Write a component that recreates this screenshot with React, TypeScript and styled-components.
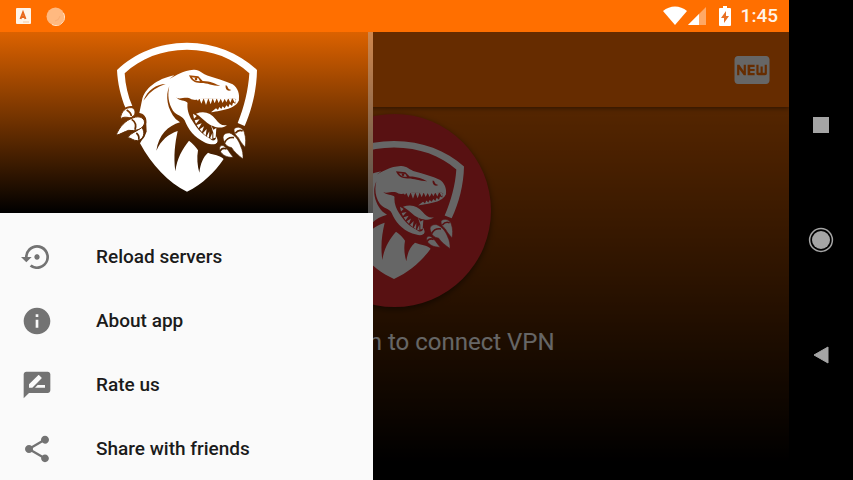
import React, { useId } from "react";
import styled, { createGlobalStyle } from "styled-components";
import {
  MdFiberNew,
  MdInfo,
  MdRateReview,
  MdSettingsBackupRestore,
  MdShare,
} from "react-icons/md";

const GlobalStyle = createGlobalStyle`
  *, *::before, *::after { box-sizing: border-box; }
  body { margin: 0; background: #000; font-family: Roboto, "Liberation Sans", sans-serif; }
  button { font: inherit; border: 0; padding: 0; background: none; color: inherit; cursor: pointer; }
`;

const Device = styled.div`
  display: grid;
  grid-template-columns: minmax(0, 1fr) 64px;
  min-height: 100vh;
  background: #000;
`;

const Screen = styled.div`
  display: flex;
  flex-direction: column;
  min-width: 0;
`;

const StatusBar = styled.header`
  display: flex;
  align-items: center;
  justify-content: space-between;
  height: 32px;
  padding: 0 11px 0 16px;
  background: #ff6f00;
  color: #fff4e8;
`;

const StatusGroup = styled.div<{ $gap: number }>`
  display: flex;
  align-items: center;
  gap: ${(p) => p.$gap}px;
`;

const Clock = styled.time`
  margin-left: 4px;
  font-size: 19px;
  font-weight: 500;
  line-height: 24px;
`;

const Stage = styled.div`
  position: relative;
  display: flex;
  flex: 1;
  flex-direction: column;
  overflow: hidden;
`;

const AppBar = styled.div`
  display: flex;
  align-items: center;
  justify-content: flex-end;
  height: 75px;
  padding: 0 16px;
  background: #ff6f00;
  box-shadow: 0 1px 5px rgba(0, 0, 0, 0.5);
  z-index: 0;
`;

const NewButton = styled.button`
  display: flex;
  color: #fff;
  font-size: 42px;
`;

const Home = styled.main`
  display: flex;
  flex: 1;
  flex-direction: column;
  align-items: center;
  gap: 20px;
  padding-top: 7px;
  background: linear-gradient(#d45e00, #000 96%);
`;

const ConnectButton = styled.button`
  display: flex;
  align-items: center;
  justify-content: center;
  width: 193px;
  height: 193px;
  padding: 0 4px 6px 0;
  border-radius: 50%;
  background: #dc2c2e;
  color: #fff;
  box-shadow: 0 2px 6px rgba(0, 0, 0, 0.5);
`;

const Hint = styled.p`
  margin: 0;
  color: #fff;
  font-size: 24px;
  line-height: 30px;
  white-space: nowrap;
`;

const Scrim = styled.div`
  position: absolute;
  inset: 0;
  background: rgba(0, 0, 0, 0.6);
`;

const Drawer = styled.aside`
  position: absolute;
  top: 0;
  bottom: 0;
  left: 0;
  width: 373px;
  background: #fafafa;
`;

const DrawerHeader = styled.div`
  display: flex;
  justify-content: center;
  height: 181px;
  padding: 3px 0 0 3px;
  border-right: 5px solid rgba(190, 190, 190, 0.4);
  background: linear-gradient(#dc6200, #000) border-box;
  color: #fff;
`;

const Menu = styled.ul`
  margin: 0;
  padding: 12px 0 0;
  list-style: none;
`;

const MenuButton = styled.button`
  display: flex;
  align-items: center;
  gap: 43px;
  width: 100%;
  height: 64px;
  padding-left: 21px;
  color: #1b1b1b;
  font-size: 19px;
  font-weight: 500;
  line-height: 24px;
  text-align: left;

  svg {
    flex: none;
    color: #737373;
    font-size: 32px;
  }
`;

const NavBar = styled.nav`
  display: flex;
  flex-direction: column;
  align-items: center;
  justify-content: center;
  gap: 83px;
  background: #000;
`;

const NavButton = styled.button`
  display: flex;
  width: 32px;
  height: 32px;
`;

function RaptorLogo({ width, height }: { width: number; height: number }) {
  const id = useId().replace(/[^a-zA-Z0-9]/g, "");
  return (
    <svg width={width} height={height} viewBox="0 0 480 480" preserveAspectRatio="none" aria-hidden="true">
      <mask id={id} maskUnits="userSpaceOnUse" x="0" y="0" width="480" height="480">
        {/* shield rim */}
        <path fill="#fff" d="M59 220C44 185 35 145 33 105C87 54 157 24 243 23C329 24 399 54 453 105C452 164 438 223 416 273L395 264C414 217 427 165 430 115C382 70 320 45 243 44C166 45 104 70 56 115C58 150 66 184 79 213Z" />
        {/* body and head */}
        <path fill="#fff" d="M108 196C115 162 151 132 205 121L190 132C213 120 230 106 263 104C281 103 290 117 306 122C331 130 358 137 380 148C396 158 402 180 398 197L385 190C345 196 310 186 270 194L245 200C242 222 248 240 258 256C275 285 295 307 320 312L330 304C338 316 336 327 324 329L352 350L353 372C327 410 290 448 243 470C188 444 137 390 102 325L122 290L120 250L100 234Z" />
        {/* neck shadow and chest stripes */}
        <path fill="#000" d="M190 153C177 184 184 222 209 252L222 262C186 272 158 300 151 347C165 315 187 298 215 288C207 325 202 363 208 409C213 370 229 342 249 317C260 325 271 337 276 346C272 368 274 392 280 413C283 386 292 365 306 353C325 362 340 358 354 373L372 350L337 306L337 318C333 332 314 329 298 323C265 308 246 283 236 256C228 240 213 243 201 227C187 205 184 180 190 153Z" />
        {/* cheek */}
        <path fill="#000" d="M210 187C222 197 240 181 256 193L272 196L262 210L246 204C236 194 221 200 210 187Z" />
        <path fill="#000" d="M112 197C125 165 151 148 179 147C151 157 136 169 126 180Z" />
        {/* eye, brow and nostril */}
        <path fill="#000" d="M249 121L277 124L290 138C314 138 329 147 343 153C317 152 302 143 283 144C266 144 255 137 249 121Z" />
        <path fill="#fff" d="M258 127L277 130L282 139C269 139 262 135 258 127Z" />
        <circle cx="270" cy="132" r="4" fill="#000" />
        <path fill="#000" d="M359 151C367 151 362 163 376 165C366 172 357 163 359 151Z" />
        {/* upper teeth */}
        <path fill="#fff" d="M270 190L276 198L280 190L286 206L293 190L300 210L307 190L314 208L320 190L326 205L332 190L338 204L344 191L350 204L356 191L361 202L367 190L373 203L379 188L386 203L392 190L399 194C390 222 351 225 315 232L330 220L336 225L340 216L346 222L350 214L356 220L361 211L367 217L371 207L378 213L381 203L388 206L389 190Z" />
        {/* lower jaw and tongue */}
        <path fill="#000" d="M262 232C257 250 275 288 318 316C333 318 332 305 326 292L310 260L285 236Z" />
        <path fill="#fff" d="M270 236C294 227 314 233 329 253C339 267 350 274 363 270C346 286 318 274 304 264C292 254 283 244 270 236Z" />
        <path fill="#fff" d="M261 236L272 243L264 251ZM266 256L281 253L270 266ZM272 270L287 265L278 280ZM281 283L294 274L288 291ZM291 294L302 282L299 302ZM302 304L310 289L309 308ZM312 310L319 294L319 313ZM314 268L322 284L331 279L329 308L322 310L322 294Z" />
        {/* left talons */}
        <path fill="#000" d="M43 246C45 222 62 210 83 214C91 218 94 225 94 234C113 232 123 246 121 264L116 274C126 293 115 318 93 322L61 309L68 292L27 306L45 269Z" />
        <g fill="#fff" stroke="#000" strokeWidth="3">
          <path d="M43 252C45 229 59 216 78 218C88 222 89 232 85 241L75 248C63 248 55 243 43 252Z" />
          <path d="M65 308C75 292 92 291 107 277C119 291 114 313 95 317C82 318 75 308 65 308Z" />
          <path d="M30 301C41 274 58 257 80 249C103 239 119 252 115 267C108 285 87 288 68 286C54 290 44 298 30 301Z" />
        </g>
        <path fill="none" stroke="#000" strokeWidth="5" d="M62 225C70 230 75 234 76 243M77 253C88 260 91 272 87 284M91 294C98 300 100 307 98 314" />
        {/* right talons */}
        <path fill="#000" d="M376 284C382 266 410 266 421 288C428 310 425 330 419 346L409 334C417 347 418 363 415 381L384 366L388 374C364 376 341 366 335 347C333 333 338 326 350 326C342 307 352 288 371 287Z" />
        <g fill="#fff" stroke="#000" strokeWidth="2">
          <path d="M384 282C395 271 411 279 415 292C420 309 420 324 417 337C408 326 402 318 397 308C391 302 383 295 384 282Z" />
          <path d="M342 347C338 334 345 329 354 333C366 341 371 355 382 367C363 368 348 360 342 347Z" />
          <path d="M354 318C346 302 356 292 371 294C386 299 398 315 404 333C410 346 412 359 411 372C396 360 384 350 377 338C364 336 357 329 354 318Z" />
        </g>
        <path fill="none" stroke="#000" strokeWidth="5" d="M388 295C394 287 402 284 410 288M356 323C361 312 371 306 384 308M342 349C346 341 353 338 362 342" />
      </mask>
      <rect width="480" height="480" fill="currentColor" mask={`url(#${id})`} />
    </svg>
  );
}

const menu = [
  { label: "Reload servers", Icon: MdSettingsBackupRestore },
  { label: "About app", Icon: MdInfo },
  { label: "Rate us", Icon: MdRateReview },
  { label: "Share with friends", Icon: MdShare },
];

export default function App() {
  return (
    <>
      <GlobalStyle />
      <Device>
        <Screen>
          <StatusBar>
            <StatusGroup $gap={15}>
              <svg width="15" height="16" viewBox="0 0 15 16" aria-hidden="true">
                <rect width="15" height="16" rx="1" fill="#fff4e8" />
                <path d="M4.500 11L7 4.500L9.500 11M5 9H9" fill="none" stroke="#e8681c" strokeWidth="2" />
                <path d="M7 14H13" stroke="#f5c9a0" />
              </svg>
              <svg width="19" height="19" viewBox="0 0 19 19" aria-hidden="true">
                <circle cx="9.500" cy="9.500" r="9" fill="#ffb980" />
                <path d="M17.500 6A8.500 8.500 0 0 1 6 17.500" fill="none" stroke="#ffe3c8" />
                <path d="M14 9A6 6 0 0 1 9 14" fill="none" stroke="#f8ad74" />
              </svg>
            </StatusGroup>
            <StatusGroup $gap={1}>
              <svg width="24" height="20" viewBox="0 0 24 20" aria-hidden="true">
                <path d="M12 19L0 5C7-1 17-1 24 5Z" fill="#fff" />
              </svg>
              <svg width="19" height="18" viewBox="0 0 19 18" aria-hidden="true">
                <path d="M0 18L18 0V18Z" fill="#ffa866" />
                <path d="M0 18L11 7V18Z" fill="#fff" />
              </svg>
              <svg width="28" height="20" viewBox="0 0 28 20" aria-hidden="true">
                <path d="M12 2H15V0H19V2H22Q23 2 23 3V19Q23 20 22 20H12Q11 20 11 19V3Q11 2 12 2Z" fill="#fff" />
                <path d="M18 5L13 12H16V17L21 10H18Z" fill="#e87022" />
              </svg>
              <Clock>1:45</Clock>
            </StatusGroup>
          </StatusBar>
          <Stage>
            <AppBar>
              <NewButton aria-label="New">
                <MdFiberNew />
              </NewButton>
            </AppBar>
            <Home>
              <ConnectButton aria-label="Connect">
                <RaptorLogo width={160} height={148} />
              </ConnectButton>
              <Hint>Tap on button to connect VPN</Hint>
            </Home>
            <Scrim />
            <Drawer>
              <DrawerHeader>
                <RaptorLogo width={160} height={160} />
              </DrawerHeader>
              <Menu>
                {menu.map(({ label, Icon }) => (
                  <li key={label}>
                    <MenuButton>
                      <Icon aria-hidden="true" />
                      {label}
                    </MenuButton>
                  </li>
                ))}
              </Menu>
            </Drawer>
          </Stage>
        </Screen>
        <NavBar aria-label="System">
          <NavButton aria-label="Recent apps">
            <svg width="32" height="32" viewBox="0 0 32 32">
              <rect x="8" y="8" width="16" height="16" fill="#a5a5a5" />
            </svg>
          </NavButton>
          <NavButton aria-label="Home">
            <svg width="32" height="32" viewBox="0 0 32 32">
              <circle cx="16" cy="16" r="11.400" fill="none" stroke="#a5a5a5" strokeWidth="1.500" />
              <circle cx="16" cy="16" r="9" fill="#a5a5a5" />
            </svg>
          </NavButton>
          <NavButton aria-label="Back">
            <svg width="32" height="32" viewBox="0 0 32 32">
              <path d="M9 16L23 8V24Z" fill="#a5a5a5" stroke="#a5a5a5" strokeLinejoin="round" />
            </svg>
          </NavButton>
        </NavBar>
      </Device>
    </>
  );
}
